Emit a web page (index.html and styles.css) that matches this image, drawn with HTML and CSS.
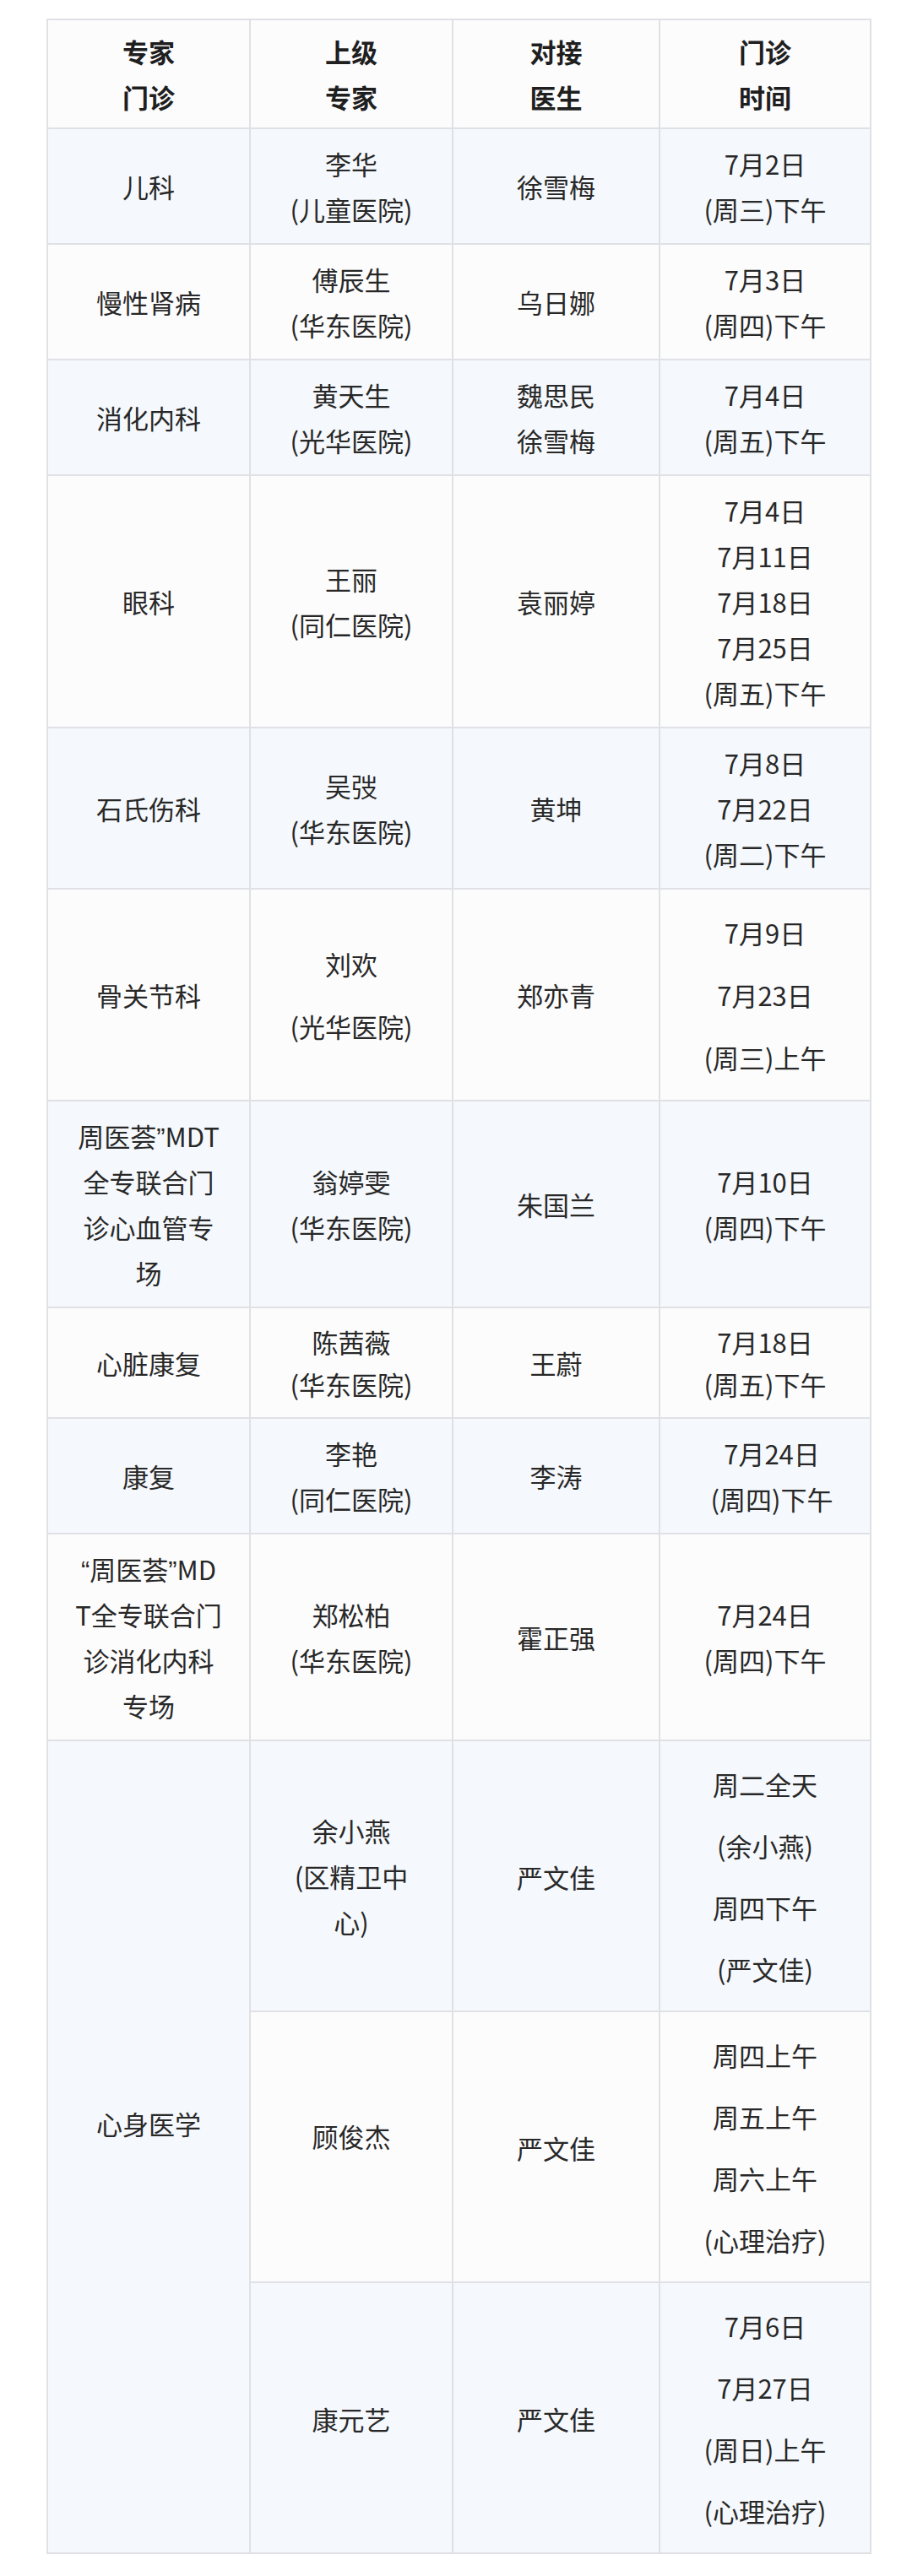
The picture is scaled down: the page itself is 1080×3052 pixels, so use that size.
FILE: index.html
```html
<!DOCTYPE html>
<html lang="zh-CN">
<head>
<meta charset="utf-8">
<title>专家门诊时间表</title>
<link rel="stylesheet" href="styles.css">
</head>
<body>
<div class="page">
  <table class="schedule">
    <colgroup>
      <col class="c1"><col class="c2"><col class="c3"><col class="c4">
    </colgroup>
    <thead>
      <tr>
        <th>专家<br>门诊</th>
        <th>上级<br>专家</th>
        <th>对接<br>医生</th>
        <th>门诊<br>时间</th>
      </tr>
    </thead>
    <tbody>
      <tr>
        <td>儿科</td>
        <td>李华<br>(儿童医院)</td>
        <td>徐雪梅</td>
        <td>7月2日<br>(周三)下午</td>
      </tr>
      <tr>
        <td>慢性肾病</td>
        <td>傅辰生<br>(华东医院)</td>
        <td>乌日娜</td>
        <td>7月3日<br>(周四)下午</td>
      </tr>
      <tr>
        <td>消化内科</td>
        <td>黄天生<br>(光华医院)</td>
        <td>魏思民<br>徐雪梅</td>
        <td>7月4日<br>(周五)下午</td>
      </tr>
      <tr>
        <td>眼科</td>
        <td>王丽<br>(同仁医院)</td>
        <td>袁丽婷</td>
        <td>7月4日<br>7月11日<br>7月18日<br>7月25日<br>(周五)下午</td>
      </tr>
      <tr>
        <td>石氏伤科</td>
        <td>吴弢<br>(华东医院)</td>
        <td>黄坤</td>
        <td>7月8日<br>7月22日<br>(周二)下午</td>
      </tr>
      <tr class="loose">
        <td>骨关节科</td>
        <td>刘欢<br>(光华医院)</td>
        <td>郑亦青</td>
        <td>7月9日<br>7月23日<br>(周三)上午</td>
      </tr>
      <tr>
        <td>周医荟<span class="q">”</span>MDT<br>全专联合门<br>诊心血管专<br>场</td>
        <td>翁婷雯<br>(华东医院)</td>
        <td>朱国兰</td>
        <td>7月10日<br>(周四)下午</td>
      </tr>
      <tr class="tight">
        <td>心脏康复</td>
        <td>陈茜薇<br>(华东医院)</td>
        <td>王蔚</td>
        <td>7月18日<br>(周五)下午</td>
      </tr>
      <tr>
        <td>康复</td>
        <td>李艳<br>(同仁医院)</td>
        <td>李涛</td>
        <td class="nudge">7月24日<br>(周四)下午</td>
      </tr>
      <tr>
        <td><span class="q">“</span>周医荟<span class="q">”</span>MD<br>T全专联合门<br>诊消化内科<br>专场</td>
        <td>郑松柏<br>(华东医院)</td>
        <td>霍正强</td>
        <td>7月24日<br>(周四)下午</td>
      </tr>
      <tr class="wide">
        <td rowspan="3" class="raised">心身医学</td>
        <td class="normal">余小燕<br>(区精卫中<br>心)</td>
        <td>严文佳</td>
        <td>周二全天<br>(余小燕)<br>周四下午<br>(严文佳)</td>
      </tr>
      <tr class="wide">
        <td class="raised-sm">顾俊杰</td>
        <td>严文佳</td>
        <td>周四上午<br>周五上午<br>周六上午<br>(心理治疗)</td>
      </tr>
      <tr class="wide">
        <td>康元艺</td>
        <td>严文佳</td>
        <td>7月6日<br>7月27日<br>(周日)上午<br>(心理治疗)</td>
      </tr>
    </tbody>
  </table>
</div>
</body>
</html>
```

FILE: styles.css
```css
html, body {
  margin: 0;
  padding: 0;
  background: #ffffff;
}

.page {
  padding: 22px 0 0 55px;
  font-family: "Noto Sans CJK SC", "Noto Sans", sans-serif;
  color: #282828;
}

.schedule {
  width: 975px;
  table-layout: fixed;
  border-collapse: collapse;
  font-size: 31px;
  line-height: 54px;
}

.c1 { width: 240px; }
.c2 { width: 240px; }
.c3 { width: 245px; }
.c4 { width: 250px; }

.schedule th,
.schedule td {
  border: 2px solid #dfe1e5;
  text-align: center;
  vertical-align: middle;
  padding: 14px 4px 13px;
  white-space: nowrap;
}

.schedule th {
  font-weight: 700;
  color: #1f1f1f;
  background: #fcfcfd;
  padding: 10px 4px 9px;
}

.schedule td {
  font-weight: 400;
}

.schedule tbody tr:nth-child(odd) td {
  background: #f5f8fc;
}

.schedule tbody tr:nth-child(even) td {
  background: #fcfcfd;
}

.schedule tr.loose td {
  line-height: 74px;
}

.schedule tr.tight td {
  line-height: 50px;
  padding-top: 15px;
  padding-bottom: 14px;
}

.schedule tr.wide td {
  line-height: 73px;
}

.schedule tr.wide td.normal {
  line-height: 54px;
}

.schedule td.raised {
  padding-bottom: 70px;
}

.schedule td.raised-sm {
  padding-bottom: 40px;
}

.schedule td.nudge {
  padding-left: 20px;
}

.q {
  font-family: "Liberation Sans", "Noto Sans", sans-serif;
  line-height: 1;
}
```
